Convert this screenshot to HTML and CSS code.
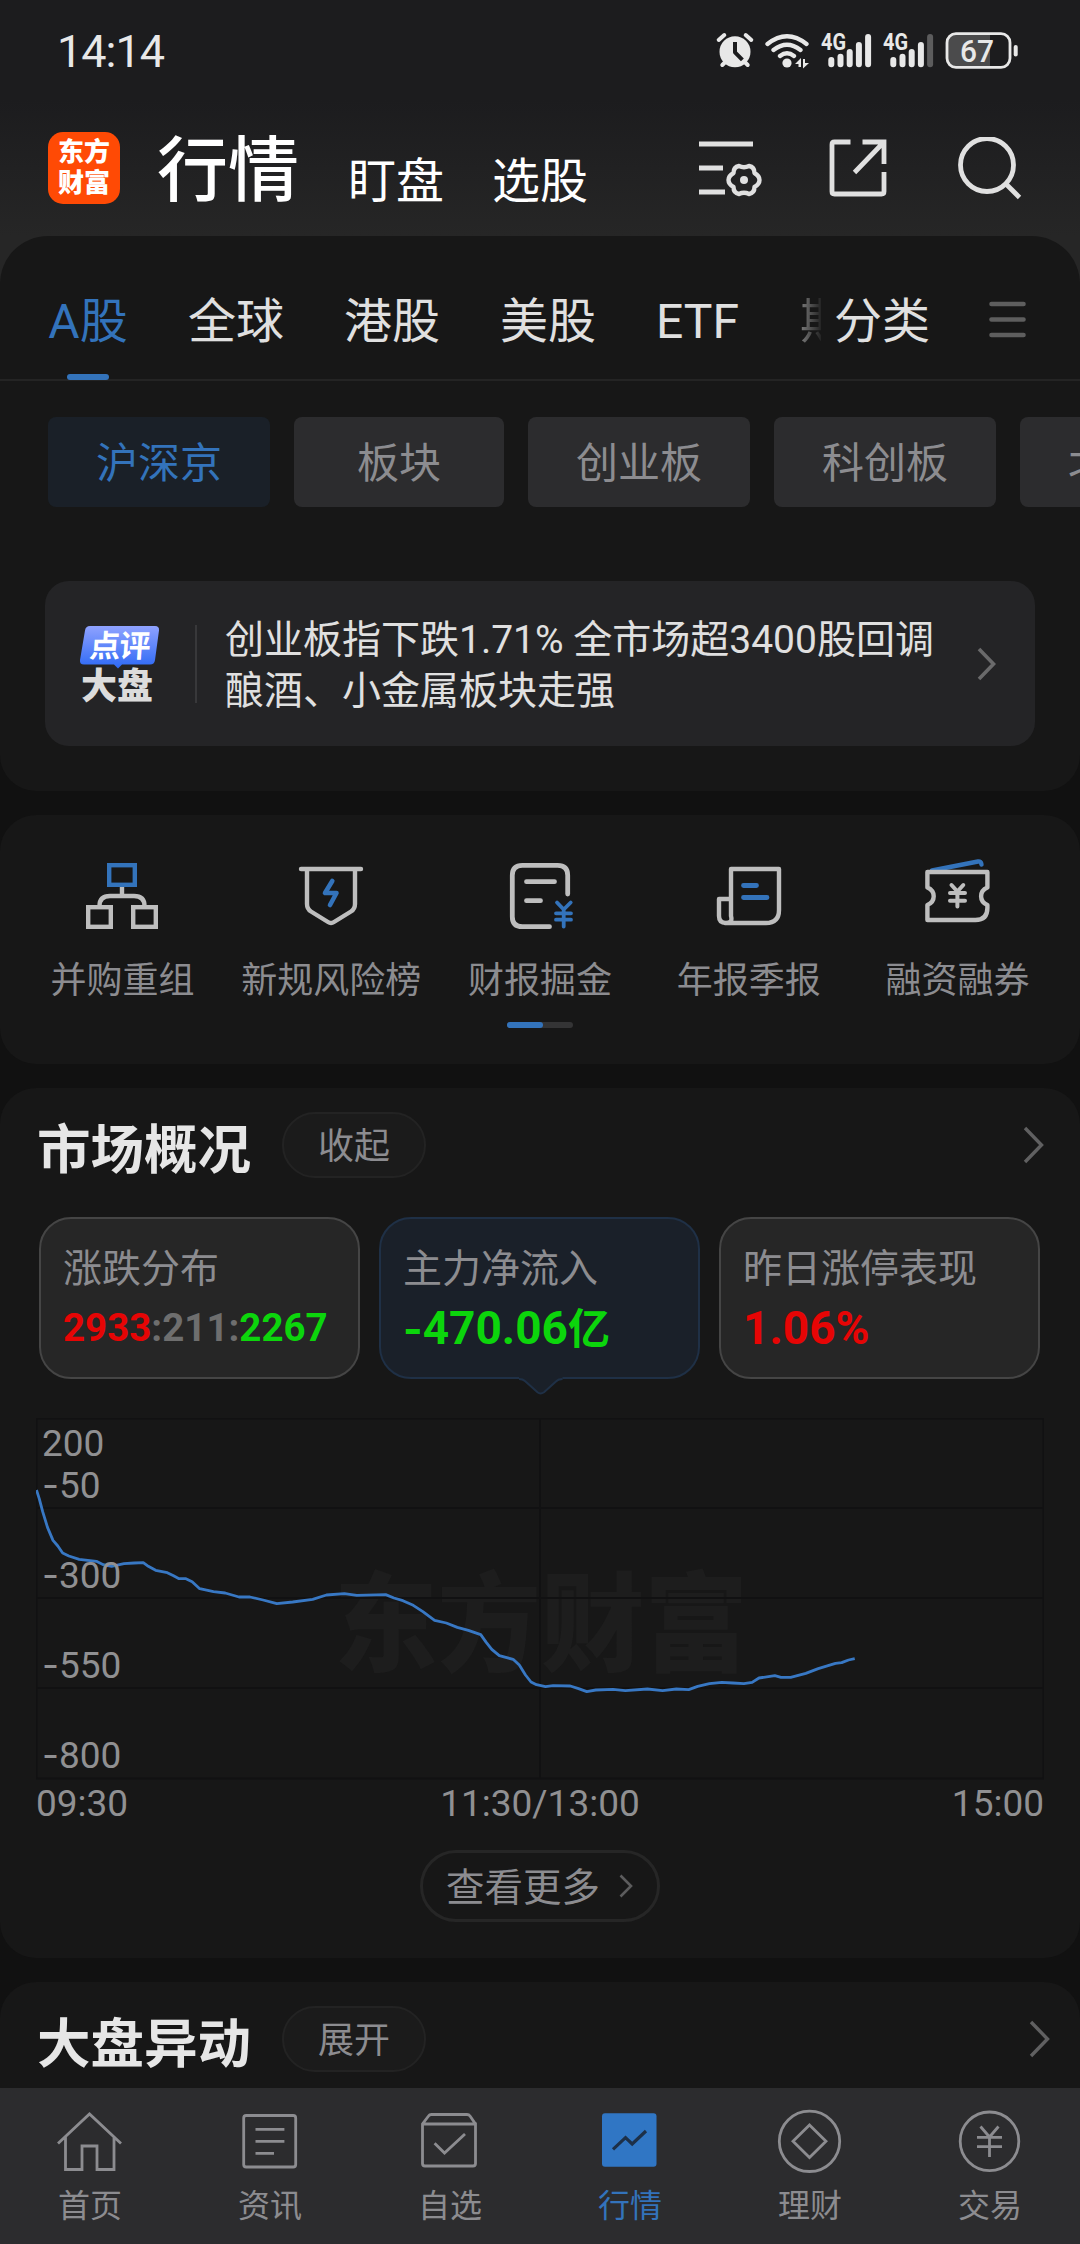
FILE: index.html
```html
<!DOCTYPE html>
<html lang="zh-CN">
<head>
<meta charset="utf-8">
<title>行情</title>
<link rel="stylesheet" href="styles.css">
</head>
<body>
<div class="top">
  <div class="status">
    <span class="clock">14:14</span>
    <svg class="status-icons" width="305" height="44" viewBox="0 0 305 44">
      <g fill="none" stroke="#e8e8e8" stroke-width="4" stroke-linecap="round">
        <circle cx="20" cy="23.7" r="15.5" fill="#e8e8e8" stroke="none"/>
        <path d="M3.7 12l5.6-5M36.3 12l-5.6-5M7.3 37l4-4M32.7 37l-4-4"/>
        <path d="M20 16v8.300l6 6.200" stroke="#1c1c1e" stroke-linecap="square" stroke-linejoin="round"/>
        <path d="M52.500 16q19.500-15.500 39 0M58.500 22q13.500-10.500 27 0M65 28q7-5.500 14 0" stroke-width="4.300"/>
        <circle cx="72" cy="35" r="4.600" fill="#e8e8e8" stroke="none"/>
        <path d="M80 36l6-6v9h-2.500v-3zM88 31h2v4h4l-6 5.500z" fill="#e8e8e8" stroke="none"/>
        <g stroke-width="6">
          <path d="M116.300 32v4.300M125.500 28.700v7.600M134.700 24v12.300M143.900 17v19.300M153.100 9v27.300"/>
          <path d="M178.300 32v4.300M187.500 28.700v7.600M196.700 24v12.300M205.900 17v19.300"/>
          <path d="M215.100 9v27.300" stroke="#5c5c5d"/>
        </g>
        <path d="M240 6h35v33h-35q-8 0-8-8v-17q0-8 8-8" fill="#4b4b4c" stroke="none"/>
        <rect x="232" y="5.700" width="63" height="33.600" rx="9" stroke-width="2.800"/>
        <path d="M300.700 19v7.500"/>
      </g>
      <text class="net" x="106" y="22" textLength="25" lengthAdjust="spacingAndGlyphs">4G</text>
      <text class="net" x="168" y="22" textLength="25" lengthAdjust="spacingAndGlyphs">4G</text>
      <text class="charge" x="245" y="34" textLength="34" lengthAdjust="spacingAndGlyphs">67</text>
    </svg>
  </div>
  <header class="header">
    <div class="logo"><span>东方</span><span>财富</span></div>
    <h1>行情</h1>
    <span class="head-link">盯盘</span>
    <span class="head-link second">选股</span>
    <div class="head-icons">
      <svg width="64" height="64" viewBox="0 0 64 64"><g fill="none" stroke="#e0e0e0" stroke-width="4.800"><path d="M1 7h54M1 31h24M1 55h26"/><path d="M41 29 Q46 31.500 51 29 Q56.500 30 56.500 36 Q61.500 39 61.500 43 Q61.500 47 56.500 50 Q56.500 56 51 57 Q46 54.500 41 57 Q35.500 56 35.500 50 Q30.500 47 30.500 43 Q30.500 39 35.500 36 Q35.500 30 41 29z" stroke-width="4.400" stroke-linejoin="round"/></g><circle cx="46" cy="43" r="4" fill="#e0e0e0"/></svg>
      <svg width="64" height="64" viewBox="0 0 64 64"><g fill="none" stroke="#e0e0e0" stroke-width="4.800"><path d="M22.500 5H6.500q-2.500 0-2.500 2.500v47q0 2.500 2.500 2.500h47q2.500 0 2.500-2.500V35M34.500 5h21.500v22M55 6L26.500 35.500"/></g></svg>
      <svg width="64" height="64" viewBox="0 0 64 64"><g fill="none" stroke="#e0e0e0" stroke-width="4.800"><circle cx="29" cy="28" r="26.500"/><path d="M48.500 47.500L61.500 60.500"/></g></svg>
    </div>
  </header>
</div>

<section class="panel first">
  <nav class="tabs">
    <a class="tab on">A股</a><a class="tab">全球</a><a class="tab">港股</a><a class="tab">美股</a><a class="tab etf">ETF</a><a class="tab cut">期</a><a class="tab sort">分类</a>
    <svg class="menu" width="38" height="38" viewBox="0 0 38 38"><path d="M2.500 3h32M2.500 18.500h32M2.500 34h32" stroke="#5e5e5e" stroke-width="4.600" stroke-linecap="round"/></svg>
  </nav>
  <div class="chips">
    <span class="chip on">沪深京</span><span class="chip short">板块</span><span class="chip">创业板</span><span class="chip">科创板</span><span class="chip">北交所</span>
  </div>
  <div class="banner">
    <div class="badge">
      <svg width="82" height="46" viewBox="0 0 82 46"><defs><linearGradient id="bg" x1="0" y1="0" x2="0" y2="1"><stop offset="0" stop-color="#8fa2ff"/><stop offset="1" stop-color="#2d69f5"/></linearGradient></defs><path d="M11 1h65q4.500 0 4 4.500l-4 29.500q-.6 4.500-5 4.500h-28l-4 4-4-4H5q-4.500 0-4-4.500L6 5.500Q6.600 1 11 1z" fill="url(#bg)"/><text class="badge-top" x="10" y="32" textLength="61" transform="skewX(-4) translate(2 0)">点评</text></svg>
      <span class="badge-bottom">大盘</span>
    </div>
    <p>创业板指下跌1.71% 全市场超3400股回调<br>酿酒、小金属板块走强</p>
    <svg class="chev" width="24" height="36" viewBox="0 0 24 36"><path d="M4 3l14.500 15L4 33" fill="none" stroke="#6a6a6b" stroke-width="3.600"/></svg>
  </div>
</section>

<section class="panel quick">
  <div class="quick-row">
    <div class="quick-item">
      <svg width="80" height="90" viewBox="0 0 80 90"><g fill="none" stroke="#bebebe" stroke-width="4.400"><path d="M40 37v9M17.500 56Q17.500 46 28 46H52Q62.500 46 62.500 56"/><rect x="6.200" y="57.200" width="22.600" height="19.600"/><rect x="51.200" y="57.200" width="22.600" height="19.600"/><rect x="27.200" y="15.200" width="25.600" height="19.600" stroke="#3373bb"/></g></svg>
      <span>并购重组</span>
    </div>
    <div class="quick-item">
      <svg width="80" height="90" viewBox="0 0 80 90"><g fill="none" stroke="#bebebe" stroke-width="4.400" stroke-linecap="round" stroke-linejoin="round"><path d="M10 19H70M16 19V54q0 5 4 7.500L37 72q3 2 6 0L60 61.500Q64 59 64 54V19"/><path d="M41.300 31L34 43H45.500L39 55" stroke="#3373bb" stroke-width="4.600"/></g></svg>
      <span>新规风险榜</span>
    </div>
    <div class="quick-item">
      <svg width="80" height="90" viewBox="0 0 80 90"><g fill="none" stroke="#bebebe" stroke-width="4.800" stroke-linecap="round" stroke-linejoin="round"><path d="M67.700 44V25.300q0-10-10-10H22.300q-10 0-10 10v41.400q0 10 10 10H49.500M26.500 31.700H54.500M26.500 50.700H40.500"/><path d="M57 52.500l6.700 7 7-7M63.700 59.500V76.500M56 63.300H71M56 69.700H71" stroke="#3373bb" stroke-width="3.800"/></g></svg>
      <span>财报掘金</span>
    </div>
    <div class="quick-item">
      <svg width="80" height="90" viewBox="0 0 80 90"><g fill="none" stroke="#bebebe" stroke-width="4.400" stroke-linecap="round" stroke-linejoin="round"><path d="M22 49H10V66q0 7 7 7t5-7V19H70V60q0 13-13 13H16"/><path d="M34.500 35.500H47.500M34.500 47.500H58" stroke="#3373bb" stroke-width="4.800"/></g></svg>
      <span>年报季报</span>
    </div>
    <div class="quick-item">
      <svg width="80" height="90" viewBox="0 0 80 90"><g fill="none" stroke="#bebebe" stroke-width="4.400" stroke-linecap="round" stroke-linejoin="round"><path d="M14 20.500L60 11.500q3-.5 3.500 3" stroke="#3373bb"/><path d="M9.400 22H69.400V37.500C61 41 61 51.500 69.400 55V58Q69.400 70 57.400 70H9.400V55C17.800 51.500 17.800 41 9.400 37.500Z" fill="#171717"/><path d="M33.500 35l5.900 6.500 5.900-6.500M39.400 41.500V56.500M32 43H47M32 50.700H47" stroke-width="4"/></g></svg>
      <span>融资融券</span>
    </div>
  </div>
  <div class="pager"><i></i></div>
</section>

<section class="panel market">
  <div class="section-head">
    <h2>市场概况</h2><span class="pill">收起</span>
    <svg class="chev" width="24" height="40" viewBox="0 0 24 40"><path d="M3 3l16.500 17L3 37" fill="none" stroke="#606061" stroke-width="3.400"/></svg>
  </div>
  <div class="cards">
    <div class="card"><span class="label">涨跌分布</span><span class="ratio"><b class="red">2933</b><b class="grey">:211:</b><b class="green">2267</b></span></div>
    <div class="card on"><span class="label">主力净流入</span><span class="value green"><span class="dash">-</span>470.06<small>亿</small></span>
      <svg class="tip" width="44" height="18" viewBox="0 0 44 18"><path d="M0 0V3Q4 3 6 5L18.500 15.500q3 2.500 6.500 0L37.500 5q2-2 6-2V0z" fill="#1a2029"/><path d="M0 2Q4 2 6 4L18.500 15.200q3 2.400 6.500 0L37.500 4q2-2 6-2" fill="none" stroke="#1f3046" stroke-width="2"/></svg>
    </div>
    <div class="card"><span class="label">昨日涨停表现</span><span class="value red">1.06%</span></div>
  </div>
  <svg class="chart" width="1008" height="362" viewBox="0 0 1008 362">
    <text class="watermark" x="298" y="245" textLength="414" lengthAdjust="spacingAndGlyphs">东方财富</text>
    <path d="M.5.500H1007.500V360.500H.5zM0 90H1008M0 180H1008M0 270H1008M504 0V360" fill="none" stroke="#111112" stroke-width="1.800"/>
    <svg x="0" y="0" width="1008" height="360" viewBox="52.300 54 1463.500 1080" preserveAspectRatio="none">
      <polyline class="flow" points="53,270 57,296 62,335 69,382 77,421 84,438 91,459 100,468 115,478 140,484 150,494 162,499 180,491 195,489 208,488 214,497 226,511 243,518 252,527 260,536 270,536 279,545 290,566 310,575 327,579 347,591 363,591 382,600 402,611 425,606 454,598 474,585 500,581 518,586 560,584 572,594 585,602 600,616 614,635 631,661 648,669 664,682 680,691 698,704 706,727 714,748 725,767 745,778 754,795 763,825 771,846 779,854 792,860 803,857 828,858 840,866 852,875 865,870 890,868 908,872 940,867 962,872 982,867 1000,869 1013,859 1030,851 1048,847 1064,849 1080,851 1092,847 1102,834 1125,827 1134,832 1148,832 1170,820 1188,806 1213,790 1222,788 1232,780 1241,776"/>
    </svg>
    <g class="axis">
      <text x="6" y="38">200</text><text x="6" y="80"><tspan class="dash">-</tspan>50</text><text x="6" y="170"><tspan class="dash">-</tspan>300</text><text x="6" y="260"><tspan class="dash">-</tspan>550</text><text x="6" y="350"><tspan class="dash">-</tspan>800</text>
    </g>
  </svg>
  <div class="times"><span>09:30</span><span>11:30/13:00</span><span>15:00</span></div>
  <div class="more"><span>查看更多</span><svg width="16" height="26" viewBox="0 0 16 26"><path d="M2.500 2.500L13 13 2.500 23.500" fill="none" stroke="#5c5c5d" stroke-width="2.600"/></svg></div>
</section>

<section class="panel moves">
  <div class="section-head">
    <h2>大盘异动</h2><span class="pill">展开</span>
    <svg class="chev" width="24" height="40" viewBox="0 0 24 40"><path d="M3 3l16.500 17L3 37" fill="none" stroke="#606061" stroke-width="3.400"/></svg>
  </div>
</section>

<nav class="bottom">
  <a><svg width="70" height="70" viewBox="0 0 70 70"><path d="M3 37.500L34.500 8 66 37.500M10.500 31V63.500H27V40H42V63.500H59V31"/></svg>首页</a>
  <a><svg width="70" height="70" viewBox="0 0 70 70"><rect x="8.700" y="9.500" width="52" height="51.500" rx="2.500"/><path d="M20.500 23.300H49.400M20.500 35.300H49.400M20.500 47.300H39"/></svg>资讯</a>
  <a><svg width="70" height="70" viewBox="0 0 70 70"><path d="M7.500 18H60.500V57.500q0 2.500-2.500 2.500H10q-2.500 0-2.500-2.500V18L13.500 10q1-1.500 3-1.500H52q2 0 3 1.500L60.500 18M19.600 37.300L29.500 47 50 28"/></svg>自选</a>
  <a class="on"><svg width="70" height="70" viewBox="0 0 70 70"><rect x="7" y="7.300" width="54.500" height="53.500" rx="3" fill="#3076c4" stroke="none"/><path d="M18 43.300L30.500 31.700 37.200 38 51 25" stroke="#1d3048" stroke-width="3.200"/></svg>行情</a>
  <a><svg width="70" height="70" viewBox="0 0 70 70"><circle cx="34.500" cy="35.300" r="30.200"/><path d="M34.500 19L51 35.300 34.500 51.600 18 35.300z"/></svg>理财</a>
  <a><svg width="70" height="70" viewBox="0 0 70 70"><circle cx="34.500" cy="35.300" r="29.300"/><path d="M25.500 20.500L34.500 31 43.500 20.500M34.500 31V51M22 31.300H47M22 40.700H47"/></svg>交易</a>
</nav>
</body>
</html>
```
FILE: styles.css
```css
* { box-sizing: border-box; }
body {
  margin: 0;
  width: 1080px;
  height: 2244px;
  overflow: hidden;
  display: flex;
  flex-direction: column;
  gap: 24px;
  background: #111111;
  color: #e0e0e0;
  font-family: Roboto, "Noto Sans CJK SC", sans-serif;
}
.top {
  flex: none;
  height: 284px;
  margin-bottom: -72px;
  background: linear-gradient(#1c1c1e 0, #1c1c1e 100px, #262626 236px);
}
.status {
  height: 100px;
  padding: 28px 60px 0 57px;
  display: flex;
  justify-content: space-between;
}
.clock { font-size: 45px; line-height: 48px; letter-spacing: -1px; color: #e8e8e8; }
.net { font-size: 23px; font-weight: 700; fill: #e8e8e8; }
.charge { font-size: 32px; font-weight: 500; fill: #e8e8e8; }
.header {
  height: 136px;
  padding: 0 58px 0 48px;
  display: flex;
  align-items: flex-start;
  color: #fff;
}
.logo {
  width: 72px;
  height: 72px;
  margin-top: 32px;
  padding-top: 5px;
  border-radius: 15px;
  background: #ff4a05;
  display: flex;
  flex-direction: column;
  align-items: center;
  font-size: 26px;
  font-weight: 900;
  line-height: 31px;
}
h1 { margin: 21px 0 0 37px; font-size: 71px; font-weight: 500; line-height: 100px; }
.head-link { margin: 47px 0 0 49px; font-size: 48px; line-height: 70px; }
.head-link.second { margin-left: 48px; }
.head-icons { margin: 37px 0 0 auto; display: flex; gap: 66px; }
.panel { flex: none; background: #171717; border-radius: 36px; }
.first { height: 555px; border-radius: 48px 48px 36px 36px; }
.tabs {
  height: 145px;
  padding-left: 48px;
  display: flex;
  align-items: flex-start;
  border-bottom: 2px solid #242424;
  font-size: 48px;
  line-height: 70px;
}
.tab { padding-top: 51px; margin-right: 60px; }
.tab.on { color: #3373bb; width: 80px; height: 144px; display: flex; flex-direction: column; align-items: center; justify-content: space-between; }
.tab.on::after { content: ""; width: 42px; height: 6px; border-radius: 3px; background: #3373bb; }
.tab.etf { width: 84px; }
.tab.cut { width: 21px; margin-right: 13px; overflow: hidden; color: transparent; background: linear-gradient(90deg, #7c7c7c, #242424); -webkit-background-clip: text; background-clip: text; }
.tab.sort { margin-right: 59px; }
.menu { margin-top: 65px; }
.chips { margin-top: 36px; padding-left: 48px; display: flex; gap: 24px; overflow: hidden; }
.chip {
  flex: none;
  width: 222px;
  height: 90px;
  border-radius: 8px;
  background: #2c2c2e;
  color: #8c8c90;
  font-size: 42px;
  line-height: 94px;
  text-align: center;
}
.chip.short { width: 210px; }
.chip.on { background: #1a2028; color: #3373bb; }
.banner {
  margin: 74px 45px 0;
  height: 165px;
  padding: 0 36px 0 34px;
  border-radius: 24px;
  background: #242426;
  display: flex;
  align-items: center;
}
.badge { width: 118px; height: 78px; border-right: 2px solid #38383a; display: flex; flex-direction: column; align-items: flex-start; }
.badge svg { flex: none; }
.badge-bottom { margin: -4px 0 0 2px; font-size: 36px; line-height: 40px; font-weight: 900; color: #dcdcdc; }
.badge-top { font-size: 31px; font-weight: 700; fill: #fff; }
.banner p { margin: 0 0 0 28px; padding-top: 5px; width: 720px; white-space: nowrap; font-size: 39px; line-height: 51px; }
.banner .chev { margin-left: auto; }
.quick { height: 249px; padding: 35px 18px 0; }
.quick-row { display: grid; grid-template-columns: repeat(5, 1fr); }
.quick-item { display: flex; flex-direction: column; align-items: center; font-size: 36px; line-height: 50px; color: #8c8c90; white-space: nowrap; }
.quick-item span { margin-top: 16px; }
.pager { width: 66px; height: 6px; margin: 16px auto 0; border-radius: 3px; background: #343435; }
.pager i { display: block; width: 36px; height: 6px; border-radius: 3px; background: #3373bb; }
.market { height: 870px; }
.section-head { display: flex; align-items: center; padding: 24px 34px 0 37px; }
.moves .section-head { padding-right: 28px; }
h2 { margin: 0; padding-top: 6px; width: 245px; height: 66px; font-size: 53.500px; font-weight: 700; line-height: 66px; white-space: nowrap; color: #e6e6e6; }
.pill { width: 144px; height: 66px; border: 2px solid #232323; border-radius: 33px; background: #1b1b1b; color: #8c8c90; font-size: 36px; line-height: 67px; text-align: center; }
.section-head .chev { margin-left: auto; }
.cards { margin: 39px 39px 0; display: grid; grid-template-columns: repeat(3, 321px); gap: 19px; }
.card {
  position: relative;
  height: 162px;
  padding: 24px 0 0 22px;
  border: 2px solid #454545;
  border-radius: 32px;
  background: #262626;
  display: flex;
  flex-direction: column;
  white-space: nowrap;
}
.card.on { background: #1a2029; border-color: #1f3046; }
.label { font-size: 39px; line-height: 52px; color: #8c8c90; }
.ratio { font-size: 38.500px; line-height: 66px; }
.value { font-size: 46px; line-height: 66px; font-weight: 700; }
.value small { font-size: 42px; }
.dash { font-family: Inter, sans-serif; }
.value .dash { font-size: 42px; }
.red { color: #e60505; }
.green { color: #0cd50c; }
.grey { color: #6e6e6e; }
.tip { position: absolute; left: 138px; top: 158px; }
.chart { display: block; margin: 39px 36px 0; }
.watermark { font-size: 108px; font-weight: 900; fill: #1d1d1d; }
.flow { fill: none; stroke: #3878c4; stroke-width: 2.800px; stroke-linejoin: round; vector-effect: non-scaling-stroke; }
.axis { font-size: 37px; fill: #909092; }
.times { margin: 0 36px; display: flex; justify-content: space-between; font-size: 37px; line-height: 48px; color: #909092; }
.more { width: 240px; height: 72px; margin: 22px auto 0; border: 3px solid #262626; border-radius: 36px; display: flex; align-items: center; justify-content: center; gap: 18px; font-size: 38.500px; line-height: 60px; color: #8c8c90; }
.more span { padding-top: 4px; }
.moves { height: 200px; }
.bottom {
  position: fixed;
  left: 0;
  bottom: 0;
  width: 1080px;
  height: 156px;
  padding-top: 18px;
  background: #2c2c2e;
  display: grid;
  grid-template-columns: repeat(6, 1fr);
}
.bottom a { display: flex; flex-direction: column; align-items: center; gap: 7px; font-size: 32px; line-height: 46px; color: #8c8c90; }
.bottom svg { fill: none; stroke: #8c8c90; stroke-width: 2.800px; }
.bottom .on { color: #3373bb; }
```
